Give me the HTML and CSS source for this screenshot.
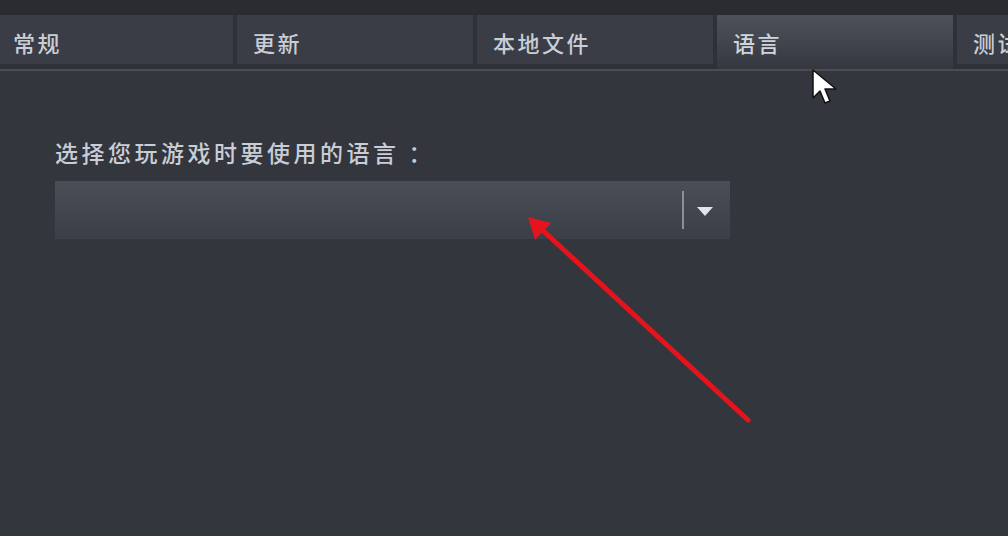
FILE: index.html
```html
<!DOCTYPE html>
<html lang="zh-CN">
<head>
  <meta charset="UTF-8">
  <title>属性 - 语言</title>
  <link rel="stylesheet" href="styles.css">
</head>
<body>
  <!-- Tabs -->
  <div class="tab-bar">
    <div class="tab first">常规</div>
    <div class="tab">更新</div>
    <div class="tab">本地文件</div>
    <div class="tab active">语言</div>
    <div class="tab">测试</div>
  </div>

  <!-- Language panel -->
  <div class="panel">
    <p class="label">选择您玩游戏时要使用的语言<span class="colon">：</span></p>
    <div class="select">
      <span class="select-value"></span>
      <span class="select-divider"></span>
      <span class="select-caret"></span>
    </div>
  </div>

  <!-- Annotation arrow + mouse pointer -->
  <svg class="overlay" width="1008" height="536" viewBox="0 0 1008 536">
    <line x1="748" y1="420" x2="538" y2="226" stroke="#e5141c" stroke-width="5" stroke-linecap="round"/>
    <polygon points="528,217 551,223 535,240" fill="#e5141c"/>
    <path d="M813 70 L813 98 L820 91 L825 103 L830 101 L825 89 L836 89 Z"
          fill="#ffffff" stroke="#111" stroke-width="1.5" stroke-linejoin="round"/>
  </svg>
</body>
</html>
```

FILE: styles.css
```css
/* Reset */
* {
  margin: 0;
  padding: 0;
  box-sizing: border-box;
}

body {
  width: 1008px;
  height: 536px;
  overflow: hidden;
  background: #33363d;
  font-family: "Noto Sans CJK SC", "Noto Sans", sans-serif;
  color: #c9cdd5;
  position: relative;
}

/* Tabs */
.tab-bar {
  display: flex;
  gap: 4px;
  padding-top: 15px;
  background: linear-gradient(#2a2c31 0, #2a2c31 15px, #2e3137 15px);
  border-bottom: 2px solid #4a4d55;
  height: 71px;
  white-space: nowrap;
  overflow: hidden;
}

.tab {
  flex: 0 0 236px;
  height: 49px;
  padding: 13px 0 0 16px;
  background: #3a3d45;
  font-size: 22px;
  font-weight: 500;
  line-height: 28px;
  letter-spacing: 2.5px;
}

.tab.first {
  margin-left: -3px;
}

.tab.active {
  height: 56px;
  margin-bottom: -2px;
  background: linear-gradient(#4d515a, #3c3f47 70%, #33363d);
  color: #d0d4dc;
}

/* Panel */
.panel {
  padding: 66px 0 0 55px;
}

.label {
  font-size: 23px;
  font-weight: 500;
  line-height: 30px;
  letter-spacing: 3.5px;
}

.colon {
  padding-left: 9px;
}

.select {
  display: flex;
  align-items: center;
  width: 675px;
  height: 58px;
  margin-top: 14px;
  background: linear-gradient(#4a4e57, #40444c 60%, #3b3f47);
}

.select-value {
  flex: 1;
}

.select-divider {
  width: 2px;
  height: 38px;
  background: #8b8f96;
}

.select-caret {
  width: 0;
  height: 0;
  margin: 3px 17px 0 13px;
  border-left: 8px solid transparent;
  border-right: 8px solid transparent;
  border-top: 9px solid #e2e4e8;
}

/* Overlay drawing */
.overlay {
  position: absolute;
  left: 0;
  top: 0;
  pointer-events: none;
}
```
